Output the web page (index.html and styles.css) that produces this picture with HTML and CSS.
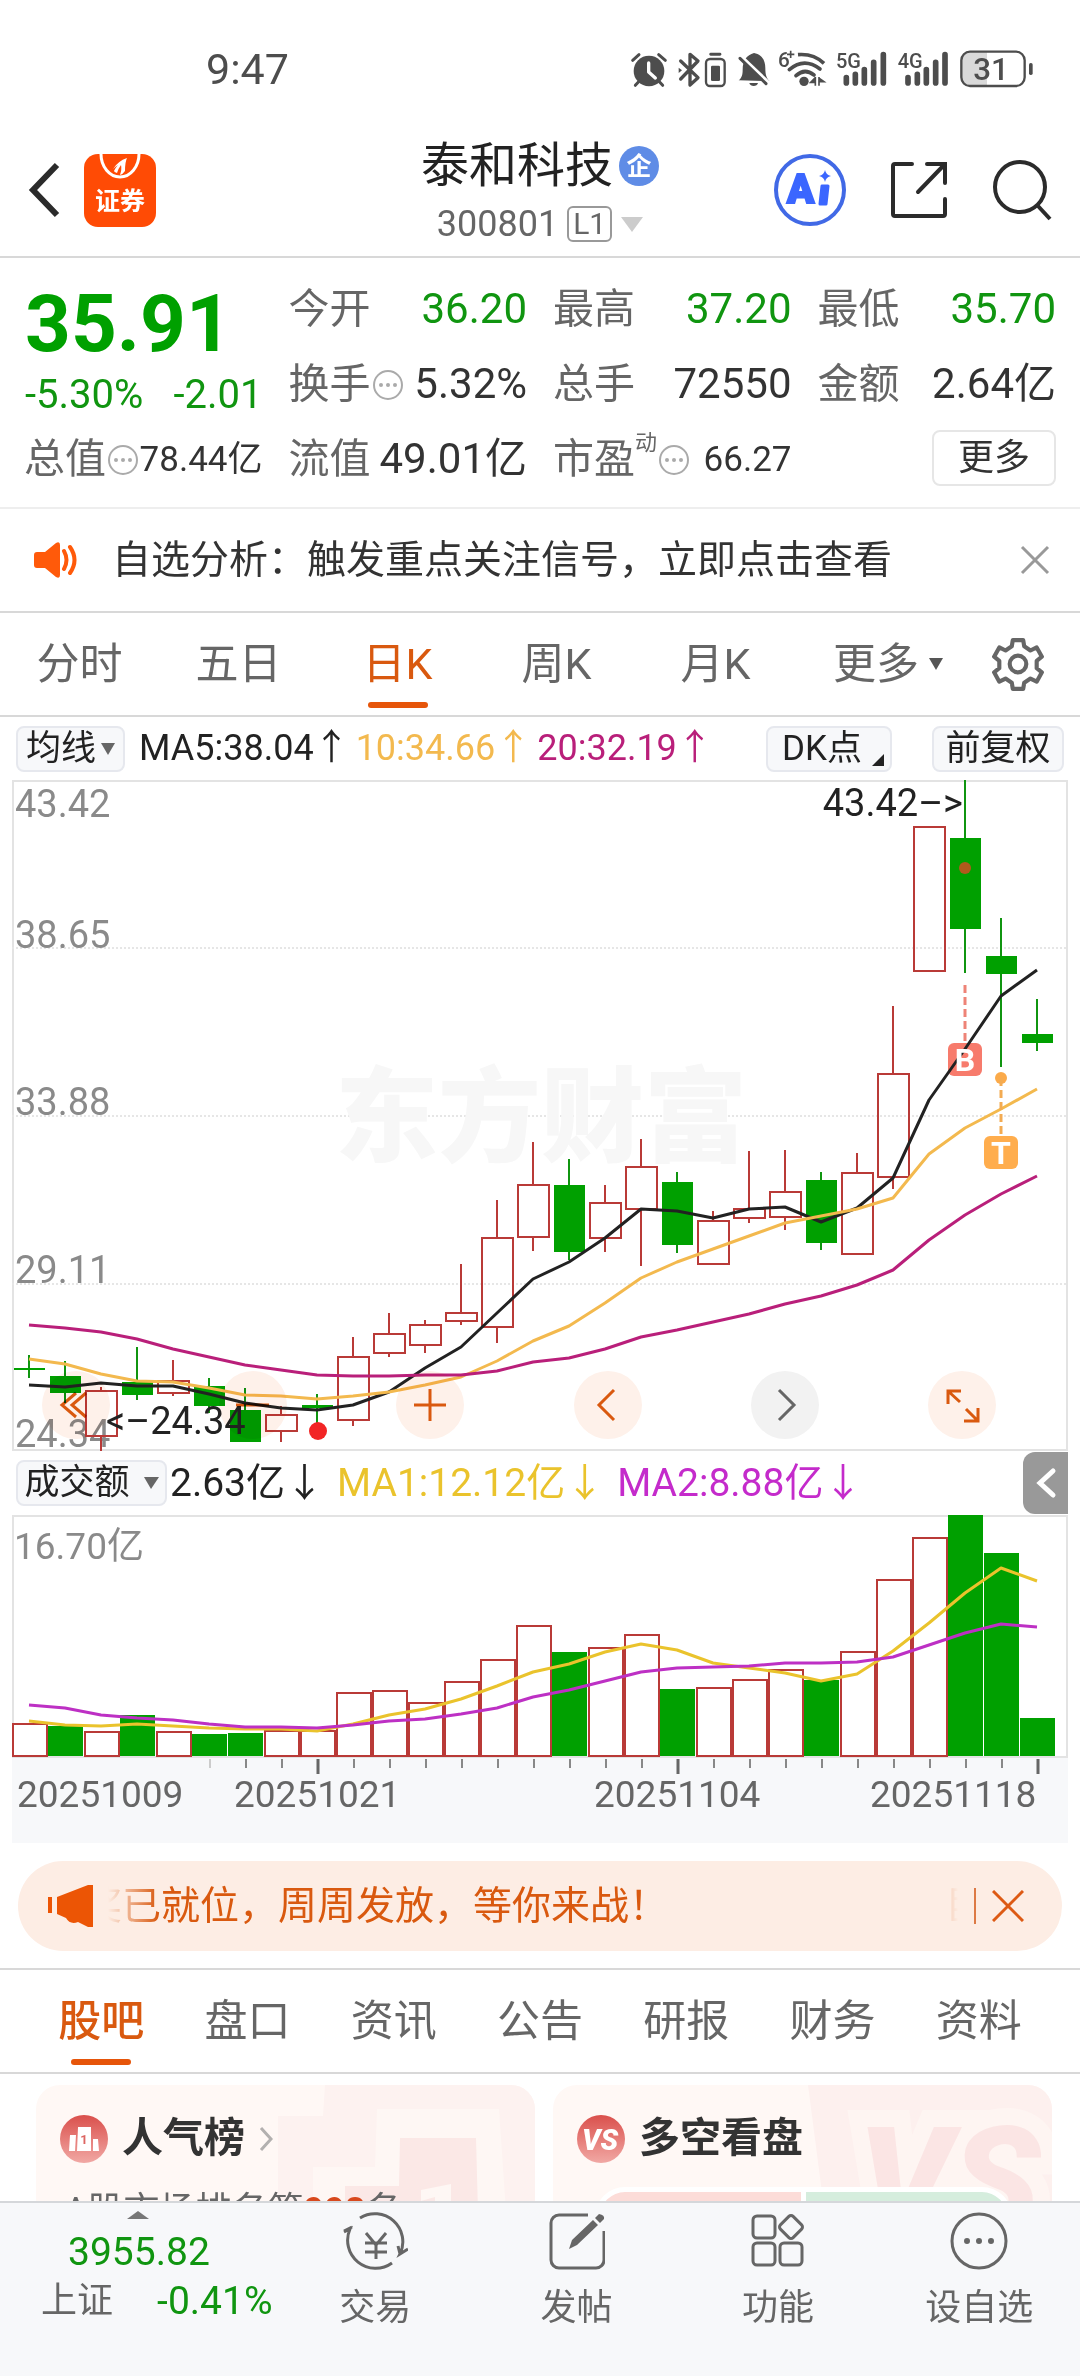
FILE: index.html
```html
<!DOCTYPE html>
<html lang="zh-CN">
<head>
<meta charset="utf-8">
<meta name="viewport" content="width=device-width, initial-scale=1">
<title>泰和科技 300801</title>
<link rel="stylesheet" href="styles.css">
</head>
<body>
<div class="app">

  <div class="status">
    <time class="status-time">9:47</time>
    <svg class="status-icons" viewBox="30 20 1212 132" aria-hidden="true">
      <g fill="#4d4d4d" stroke="none">
        <circle cx="87" cy="92" r="46"/>
        <path d="M38 60 57 43M116 43l20 17M58 122l-12 13M116 122l12 13" stroke="#4d4d4d" stroke-width="9" stroke-linecap="round"/>
        <path d="M86 68v27l20 18" fill="none" stroke="#fff" stroke-width="10" stroke-linecap="round" stroke-linejoin="round"/>
        <path d="M182 62l52 50-24 22V42l24 20-52 54" fill="none" stroke="#4d4d4d" stroke-width="10" stroke-linecap="round" stroke-linejoin="round"/>
        <path d="M176 82l10 8-10 8z"/>
        <rect x="268" y="37" width="36" height="9" rx="4"/>
        <rect x="258" y="56" width="56" height="81" rx="12" fill="none" stroke="#4d4d4d" stroke-width="7"/>
        <rect x="273" y="76" width="27" height="46" rx="4"/>
        <path d="M356 120c10-8 12-18 12-32 0-28 12-44 34-50 24 4 34 22 34 46 0 20 4 30 12 38z"/>
        <path d="M388 128h26c-2 12-24 12-26 0z"/>
        <path d="M356 42l92 88" stroke="#fff" stroke-width="12"/>
        <path d="M360 54l78 76" stroke="#4d4d4d" stroke-width="9" stroke-linecap="round"/>
        <path d="M508 88q44-38 92-2M528 106q26-24 54-2" fill="none" stroke="#4d4d4d" stroke-width="11" stroke-linecap="round"/>
        <path d="M534 43q46-4 78 26" fill="none" stroke="#4d4d4d" stroke-width="11"/>
        <circle cx="552" cy="123" r="14"/>
        <path d="M586 110v26M586 112l-14 14h14M597 110v26M598 114l14 10h-14" stroke="#4d4d4d" stroke-width="5"/>
        <text x="474" y="80" font-size="62" font-weight="500">6</text>
        <path d="M501 42h22M512 31v22" stroke="#4d4d4d" stroke-width="5"/>
        <text x="648" y="83" font-size="60" font-weight="500">5G</text>
        <text x="833" y="83" font-size="60" font-weight="500">4G</text>
        <path d="M679 112v16M706 102v26M733 88v40M761 66v62M790 43v85M864 112v16M892 102v26M919 88v40M947 66v62M975 43v85" stroke="#4d4d4d" stroke-width="17" stroke-linecap="round"/>
      </g>
      <path d="M1101 36h-52a24 24 0 0 0-24 24v50a24 24 0 0 0 24 24h52z" fill="#d9d9d9"/>
      <rect x="1024" y="34" width="190" height="103" rx="26" fill="none" stroke="#4d4d4d" stroke-width="7"/>
      <rect x="1227" y="68" width="11" height="36" rx="5" fill="#4d4d4d"/>
      <text x="1113" y="119" font-size="94" font-weight="500" text-anchor="middle" fill="#4d4d4d">31</text>
    </svg>
  </div>

  <header class="topbar">
    <div class="topbar-side">
      <button class="icon-btn" aria-label="返回"><svg width="34" height="58" viewBox="0 0 34 58"><path d="M29 4 5 29l24 25" fill="none" stroke="#2b2b2b" stroke-width="6"/></svg></button>
      <button class="icon-btn" aria-label="证券"><svg width="72" height="73" viewBox="0 0 72 73">
        <rect width="72" height="73" rx="14" fill="#ff4b05"/>
        <path d="M17 0a19 23 0 0 0 38 0" fill="none" stroke="#fff" stroke-width="3"/>
        <path d="M29 15q5-8 14-11-2 4-2 13-2 3-5 4 2-6 1-10-3 4-4 8-3-1-3-2 2-4 4-6-3 2-5 4z" fill="#fff"/>
        <text x="36" y="56" font-size="25" font-weight="700" text-anchor="middle" fill="#fff">证券</text>
      </svg></button>
    </div>
    <div class="title">
      <h1>泰和科技<svg width="40" height="40" viewBox="0 0 40 40"><circle cx="20" cy="20" r="20" fill="#5f8ce6"/><text x="20" y="29" font-size="25" font-weight="700" text-anchor="middle" fill="#fff">企</text></svg></h1>
      <button class="code">300801<span class="level">L1</span><svg width="22" height="15" viewBox="0 0 22 15"><path d="M0 0h22L11 15z" fill="#ccc"/></svg></button>
    </div>
    <div class="topbar-side topbar-right">
      <button class="icon-btn" aria-label="AI"><svg width="72" height="72" viewBox="0 0 72 72"><circle cx="36" cy="36" r="34" fill="none" stroke="#4169e6" stroke-width="4"/><text x="13" y="49" font-size="40" font-weight="900" fill="#3b66ff" stroke="#3b66ff" stroke-width="2">A</text><path d="M48 32h6l-2 18h-6z" fill="#3b66ff" stroke="#3b66ff" stroke-width="3" stroke-linejoin="round"/><path d="M51 16q1 5 6 6-5 1-6 6-1-5-6-6 5-1 6-6z" fill="#3b66ff"/></svg></button>
      <button class="icon-btn" aria-label="分享"><svg width="58" height="58" viewBox="0 0 58 58"><path d="M22 3H5a2 2 0 0 0-2 2v48a2 2 0 0 0 2 2h48a2 2 0 0 0 2-2V38M37 3h18v19M55 3 28 31" fill="none" stroke="#2b2b2b" stroke-width="4" stroke-linecap="round"/></svg></button>
      <button class="icon-btn" aria-label="搜索"><svg width="60" height="62" viewBox="0 0 60 62"><circle cx="28" cy="28" r="25" fill="none" stroke="#2b2b2b" stroke-width="4"/><path d="M46 47l12 13" stroke="#2b2b2b" stroke-width="4"/></svg></button>
    </div>
  </header>

  <section class="quote">
    <div class="price-block">
      <strong class="price">35.91</strong>
      <p class="change"><span>-5.30%</span><span>-2.01</span></p>
    </div>
    <p class="cell"><span>今开</span><b class="down">36.20</b></p>
    <p class="cell"><span>最高</span><b class="down">37.20</b></p>
    <p class="cell"><span>最低</span><b class="down">35.70</b></p>
    <p class="cell"><span>换手</span><i class="hint"></i><b>5.32%</b></p>
    <p class="cell"><span>总手</span><b>72550</b></p>
    <p class="cell"><span>金额</span><b>2.64亿</b></p>
    <p class="cell"><span>总值</span><i class="hint"></i><b class="small">78.44亿</b></p>
    <p class="cell"><span>流值</span><b>49.01亿</b></p>
    <p class="cell"><span>市盈</span><sup>动</sup><i class="hint"></i><b class="small">66.27</b></p>
    <div class="cell cell-end"><button class="more">更多</button></div>
  </section>

  <section class="notice">
    <svg width="46" height="38" viewBox="0 0 46 38"><path d="M3 11h8L22 2q4-2 4 2v30q0 4-4 2l-11-9H3q-3 0-3-3V14q0-3 3-3z" fill="#ff5a0a"/><path d="M30 10q5 9 0 18M36 6q9 13 0 26" fill="none" stroke="#ff5a0a" stroke-width="4" stroke-linecap="round"/></svg>
    <a href="#signal">自选分析：触发重点关注信号，立即点击查看</a>
    <button class="icon-btn" aria-label="关闭"><svg width="30" height="30" viewBox="0 0 30 30"><path d="M2 2l26 26M28 2 2 28" stroke="#999" stroke-width="3"/></svg></button>
  </section>

  <nav class="periods">
    <button>分时</button>
    <button>五日</button>
    <button class="active">日K</button>
    <button>周K</button>
    <button>月K</button>
    <button class="wide">更多<svg width="14" height="12" viewBox="0 0 14 12"><path d="M0 0h14L7 12z" fill="#555"/></svg></button>
    <button class="gear" aria-label="设置"><svg width="54" height="54" viewBox="0 0 52 52" fill="none" stroke="#666" stroke-width="4" stroke-linejoin="round"><path d="M21 3h10l1 6 6 4 6-3 5 9-5 4v7l5 4-5 9-6-3-6 4-1 6H21l-1-6-6-4-6 3-5-9 5-4v-7l-5-4 5-9 6 3 6-4z"/><circle cx="26" cy="26" r="8"/></svg></button>
  </nav>

  <section class="chart">
    <div class="legend">
      <button class="chip">均线<svg width="14" height="12" viewBox="0 0 14 12"><path d="M0 0h14L7 12z" fill="#666"/></svg></button>
      <span class="ma5">MA5:38.04↑</span><span class="ma10">10:34.66↑</span><span class="ma20">20:32.19↑</span>
      <button class="chip chip-dk">DK点<svg width="12" height="12" viewBox="0 0 12 12"><path d="M12 0v12H0z" fill="#222"/></svg></button>
      <button class="chip chip-adj">前复权</button>
    </div>

    <div class="kline">
      <svg class="plot" viewBox="12 780 1056 671" role="img" aria-label="日K线">
        <rect x="13" y="781" width="1054" height="669" fill="none" stroke="#e3e3e3" stroke-width="2"/>
        <path d="M12 948h1056M12 1116h1056M12 1284h1056" stroke="#e6e6e6" stroke-width="2" stroke-dasharray="2 2"/>
        <text x="541" y="1154" class="watermark">东方财富</text>
        <g class="axis">
          <text x="15" y="817">43.42</text>
          <text x="15" y="948">38.65</text>
          <text x="15" y="1115">33.88</text>
          <text x="15" y="1283">29.11</text>
          <text x="15" y="1447">24.34</text>
        </g>
        <!-- rising candles: wicks, then bodies -->
        <path class="up" d="M101 1387v4M101 1436v15M173 1360v21M173 1393v3M281 1406v9M281 1431v11M353 1337v20M353 1420v6M389 1313v21M389 1353v4M425 1320v5M425 1345v8M461 1264v49M461 1321v4M497 1200v38M497 1327v16M533 1142v43M533 1237v14M605 1185v18M605 1238v14M641 1139v28M641 1209v57M713 1211v10M749 1151v58M749 1218v5M785 1150v42M785 1217v13M857 1153v20M893 1006v68M893 1177v12"/>
        <path class="up" d="M86 1391h31v45h-31zM158 1381h31v12h-31zM266 1415h31v16h-31zM338 1357h31v63h-31zM374 1334h31v19h-31zM410 1325h31v20h-31zM446 1313h31v8h-31zM482 1238h31v89h-31zM518 1185h31v52h-31zM590 1203h31v35h-31zM626 1167h31v42h-31zM698 1221h31v43h-31zM734 1209h31v9h-31zM770 1192h31v25h-31zM842 1173h31v81h-31zM878 1074h31v103h-31zM914 827h31v144h-31z"/>
        <!-- falling candles -->
        <path class="down-wick" d="M29 1355v23M65 1361v42M137 1347v53M209 1378v35M245 1388v54M317 1394v29M569 1159v101M677 1172v81M821 1172v78M965 780v193M1001 918v149M1037 999v52"/>
        <path class="down-body" d="M14 1368h31v2h-31zM50 1376h31v17h-31zM122 1382h31v13h-31zM194 1386h31v20h-31zM230 1410h31v32h-31zM302 1405h31v3h-31zM554 1185h31v67h-31zM662 1182h31v63h-31zM806 1180h31v63h-31zM950 838h31v91h-31zM986 956h31v18h-31zM1022 1034h31v9h-31z"/>
        <circle cx="965" cy="868" r="6" fill="#b0591c"/>
        <path d="M965 985v57" stroke="#ee8377" stroke-width="3" stroke-dasharray="8 4"/>
        <rect x="948" y="1043" width="34" height="33" rx="6" fill="#f77b6c"/>
        <polyline class="line" stroke="#222" points="29,1385 65,1387 101,1383 137,1386 173,1386 209,1394 245,1403 281,1408 317,1410 353,1405 389,1392 425,1368 461,1347 497,1313 533,1279 569,1262 605,1238 641,1209 677,1211 713,1218 749,1209 785,1207 821,1222 857,1208 893,1178 929,1100 965,1049 1001,996 1037,970"/>
        <polyline class="line" stroke="#f3b94e" points="29,1359 65,1364 101,1374 137,1381 173,1382 209,1388 245,1395 281,1396 317,1399 353,1396 389,1392 425,1385 461,1377 497,1361 533,1341 569,1326 605,1303 641,1278 677,1262 713,1249 749,1236 785,1223 821,1216 857,1209 893,1198 929,1154 965,1128 1001,1109 1037,1089"/>
        <polyline class="line" stroke="#b91f7a" points="29,1325 65,1328 101,1332 137,1339 173,1349 209,1357 245,1365 281,1370 317,1375 353,1376 389,1376 425,1375 461,1375 497,1371 533,1362 569,1358 605,1349 641,1337 677,1330 713,1322 749,1314 785,1304 821,1296 857,1285 893,1270 929,1240 965,1215 1001,1194 1037,1176"/>
        <text x="965" y="1071" class="tag">B</text>
        <circle cx="1001" cy="1078" r="6" fill="#fbaa4a"/>
        <path d="M1001 1078v57" stroke="#f3ab52" stroke-width="3" stroke-dasharray="8 4"/>
        <rect x="984" y="1136" width="34" height="33" rx="6" fill="#ffad4d"/>
        <text x="1001" y="1164" class="tag">T</text>
        <circle cx="318" cy="1431" r="9" fill="#f22525"/>
        <text x="963" y="816" class="mark" text-anchor="end">43.42–&gt;</text>
        <text x="106" y="1434" class="mark">&lt;–24.34</text>
      </svg>
      <div class="tools">
        <button aria-label="最左"><svg viewBox="0 0 68 68"><path d="M34 22 20 34l14 12M44 22 30 34l14 12"/></svg></button>
        <button aria-label="缩小"><svg viewBox="0 0 68 68"><path d="M17 34h33"/></svg></button>
        <button aria-label="放大"><svg viewBox="0 0 68 68"><path d="M18 34h32M34 18v32"/></svg></button>
        <button aria-label="左移"><svg viewBox="0 0 68 68"><path d="M40 19 25 34l15 15"/></svg></button>
        <button class="muted" aria-label="右移"><svg viewBox="0 0 68 68"><path d="M28 19l15 15-15 15"/></svg></button>
        <button aria-label="全屏"><svg viewBox="0 0 68 68"><path d="M33 20H20v13M20 20l12 11M50 37v13H36M50 50 38 38"/></svg></button>
      </div>
    </div>

    <div class="legend legend-volume">
      <button class="chip chip-volume">成交额<svg width="15" height="12" viewBox="0 0 15 12"><path d="M0 0h15L7 12z" fill="#666"/></svg></button>
      <span>2.63亿↓</span><span class="vol1">MA1:12.12亿↓</span><span class="vol2">MA2:8.88亿↓</span>
      <button class="drawer" aria-label="展开"><svg width="45" height="62" viewBox="0 0 45 62"><path d="M30 19 17 31l13 12" fill="none" stroke="#fff" stroke-width="5" stroke-linecap="round"/></svg></button>
    </div>

    <svg class="plot" viewBox="12 1515 1056 328" role="img" aria-label="成交额">
      <rect x="12" y="1757" width="1056" height="86" fill="#f7f8fa"/>
      <rect x="13" y="1516" width="1054" height="241" fill="none" stroke="#e3e3e3" stroke-width="2"/>
      <text x="14" y="1559" class="volume-max">16.70亿</text>
      <path class="up" d="M13 1724h34v32h-34zM85 1732h34v24h-34zM157 1732h34v24h-34zM265 1731h34v25h-34zM301 1731h34v25h-34zM337 1693h34v63h-34zM373 1691h34v65h-34zM409 1703h34v53h-34zM445 1682h34v74h-34zM481 1660h34v96h-34zM517 1626h34v130h-34zM589 1648h34v108h-34zM625 1635h34v121h-34zM697 1688h34v68h-34zM733 1680h34v76h-34zM769 1670h34v86h-34zM841 1652h34v104h-34zM877 1580h34v176h-34zM913 1538h34v218h-34z"/>
      <path class="down-body" d="M48 1726h35v30h-35zM120 1715h35v41h-35zM192 1734h35v22h-35zM228 1733h35v23h-35zM552 1652h35v104h-35zM660 1689h35v67h-35zM804 1680h35v76h-35zM948 1515h35v241h-35zM984 1553h35v203h-35zM1020 1718h35v38h-35z"/>
      <polyline class="line" stroke="#eac32c" points="29,1721 65,1725 101,1726 137,1724 173,1726 209,1728 245,1729 281,1729 317,1731 353,1724 389,1715 425,1709 461,1699 497,1686 533,1672 569,1664 605,1652 641,1644 677,1650 713,1663 749,1668 785,1673 821,1681 857,1674 893,1651 929,1623 965,1593 1001,1568 1037,1581"/>
      <polyline class="line" stroke="#bd30c4" points="29,1705 65,1708 101,1715 137,1718 173,1720 209,1724 245,1727 281,1727 317,1728 353,1725 389,1721 425,1719 461,1714 497,1708 533,1697 569,1690 605,1681 641,1672 677,1668 713,1667 749,1666 785,1663 821,1663 857,1662 893,1657 929,1645 965,1633 1001,1624 1037,1627"/>
      <path d="M210 1759v9" stroke="#ccc" stroke-width="2"/>
      <path d="M246 1759v9M282 1759v9M354 1759v9M390 1759v9M426 1759v9M462 1759v9M498 1759v9M534 1759v9M570 1759v9M606 1759v9M642 1759v9M714 1759v9M750 1759v9M786 1759v9M822 1759v9M858 1759v9M894 1759v9M930 1759v9M966 1759v9M1002 1759v9" stroke="#888" stroke-width="2"/>
      <path d="M318 1759v15M678 1759v15M1038 1759v15" stroke="#666" stroke-width="3"/>
      <g class="dates">
        <text x="17" y="1807">20251009</text>
        <text x="234" y="1807">20251021</text>
        <text x="594" y="1807">20251104</text>
        <text x="870" y="1807">20251118</text>
      </g>
    </svg>
  </section>

  <section class="banner">
    <svg width="46" height="42" viewBox="0 0 46 42"><path d="M0 12h4v16H0zM9 12 40 0h5v42h-5l-10-5q-8 3-12-4L9 29z" fill="#ec5505"/></svg>
    <div class="marquee"><span>巨奖已就位，周周发放，等你来战！</span><span>巨奖已就位</span></div>
    <button class="banner-close" aria-label="关闭"><svg width="32" height="32" viewBox="0 0 32 32"><path d="M1 1l30 30M31 1 1 31" stroke="#dd5a14" stroke-width="3"/></svg></button>
  </section>

  <nav class="sections">
    <button class="active">股吧</button>
    <button>盘口</button>
    <button>资讯</button>
    <button>公告</button>
    <button>研报</button>
    <button>财务</button>
    <button>资料</button>
  </nav>

  <section class="cards">
    <article class="card">
      <svg class="card-art" viewBox="0 0 500 200" preserveAspectRatio="xMaxYMin slice" aria-hidden="true">
        <path d="M290 0h210v200H243V31h45z" fill="#fdf2f0"/>
        <path d="M342 24h122l12 176H278V82h62z" fill="#fef7f4"/>
        <path d="M365 53h76l4 147H310V101h54z" fill="#fbe8e6"/>
        <path d="M386 105l30-6v101h-16v-88l-14 4z" fill="#fef7f4"/>
      </svg>
      <h2><svg width="48" height="48" viewBox="0 0 48 48"><defs><linearGradient id="badge" x2="0" y2="1"><stop stop-color="#da504c"/><stop offset="1" stop-color="#f1a8a4"/></linearGradient></defs><circle cx="24" cy="24" r="24" fill="url(#badge)"/><path d="M10 20h6l-1 16H9zM18 12h13v24H17zM33 24h5l1 12h-6z" fill="#fff"/><text x="24" y="29" font-size="13" font-weight="700" text-anchor="middle" fill="#dd6663">1</text></svg>人气榜<svg width="14" height="24" viewBox="0 0 14 24"><path d="M2 1l10 11L2 23" fill="none" stroke="#b3b0af" stroke-width="3"/></svg></h2>
      <p class="rank">A股市场排名第<b>998</b>名</p>
    </article>
    <article class="card">
      <svg class="card-art" viewBox="0 0 500 200" preserveAspectRatio="xMaxYMin slice" aria-hidden="true">
        <path d="M256 0h244v200H282z" fill="#fdf0ee"/>
        <text x="306" y="146" class="art-vs">VS</text>
      </svg>
      <h2><svg width="48" height="48" viewBox="0 0 48 48"><circle cx="24" cy="24" r="24" fill="url(#badge)"/><text x="23" y="35" font-size="29" font-weight="900" font-style="italic" text-anchor="middle" fill="#fff">VS</text></svg>多空看盘</h2>
      <div class="gauge"><span></span><span></span></div>
    </article>
  </section>

  <nav class="bottom">
    <a class="index" href="#index">
      <svg width="22" height="8" viewBox="0 0 22 8"><path d="M11 0l11 8H0z" fill="#777"/></svg>
      <span class="index-value">3955.82</span>
      <span class="index-row"><span>上证</span><span class="index-change">-0.41%</span></span>
    </a>
    <a href="#trade"><svg width="66" height="60" viewBox="0 0 66 60"><path d="M18 7A28 28 0 0 1 58 43l8-5M50 52A28 28 0 0 1 8 18l-6 3M2 20l8-4M58 43l-2-8M34 34v14M34 34 24 22M34 34l10-12M23 32h22M23 41h22"/></svg>交易</a>
    <a href="#post"><svg width="56" height="60" viewBox="0 0 56 60"><path d="M39 4H10a8 8 0 0 0-8 8v37a8 8 0 0 0 8 8h37a8 8 0 0 0 8-8V20"/><path d="M20 38l3-9L44 9l5 5-21 20zM46 7l4-4q6 1 5 5l-4 4z" fill="#666" stroke="none"/></svg>发帖</a>
    <a href="#tools"><svg width="54" height="60" viewBox="0 0 54 60"><rect x="2" y="5" width="22" height="22" rx="4"/><rect x="2" y="32" width="22" height="22" rx="4"/><rect x="29" y="32" width="22" height="22" rx="4"/><rect x="31" y="7" width="18" height="18" rx="3" transform="rotate(45 40 16)"/></svg>功能</a>
    <a href="#watch"><svg width="58" height="60" viewBox="0 0 58 60"><circle cx="29" cy="30" r="27"/><path d="M17 30h0M29 30h0M41 30h0" stroke-width="6" stroke-linecap="round"/></svg>设自选</a>
  </nav>
</div>
</body>
</html>
```

FILE: styles.css
```css
* { box-sizing: border-box; }

body {
  margin: 0;
  background: #fff;
  color: #222;
  font-family: Roboto, "Noto Sans CJK SC", sans-serif;
  font-size: 36px;
  line-height: 1.4;
}

h1, h2, p { margin: 0; font-weight: 400; }

button {
  margin: 0;
  padding: 0;
  border: 0;
  background: none;
  color: inherit;
  font: inherit;
  white-space: nowrap;
}

a { color: inherit; text-decoration: none; }
svg { display: block; flex: none; }

.app {
  display: flex;
  flex-direction: column;
  height: 100vh;
}
.app > * { flex: none; }

.icon-btn { display: flex; }

/* status bar */
.status {
  display: flex;
  align-items: center;
  justify-content: space-between;
  height: 124px;
  padding: 14px 46px 0 206px;
  color: #4d4d4d;
}
.status-time { font-size: 43px; }
.status-icons { width: 404px; height: 44px; }

/* title bar */
.topbar {
  display: grid;
  grid-template-columns: 1fr auto 1fr;
  align-items: center;
  height: 134px;
  padding: 0 28px 0 28px;
  border-bottom: 2px solid #d8d8d8;
}
.topbar-side { display: flex; align-items: center; gap: 22px; }
.topbar-right { justify-content: flex-end; gap: 44px; }
.title { display: flex; flex-direction: column; align-items: center; padding-top: 8px; }
.title h1 {
  display: flex;
  align-items: center;
  gap: 6px;
  font-size: 48px;
  line-height: 60px;
}
.code {
  display: flex;
  align-items: center;
  gap: 9px;
  color: #666;
  line-height: 56px;
}
.level {
  padding: 0 4px;
  border: 2px solid #999;
  border-radius: 6px;
  font-size: 30px;
  line-height: 32px;
}

/* quote grid */
.quote {
  display: grid;
  grid-template-columns: repeat(4, 1fr);
  grid-auto-rows: 75px;
  column-gap: 26px;
  padding: 14px 24px 12px;
  height: 251px;
  border-bottom: 2px solid #eee;
}
.price-block { grid-row: span 2; padding: 5px 0 0 1px; color: #00a000; }
.price { display: block; font-size: 80px; line-height: 94px; font-weight: 700; }
.change {
  display: flex;
  justify-content: space-between;
  font-size: 40px;
  line-height: 48px;
  color: #109510;
}
.cell { display: flex; align-items: center; font-size: 41px; color: #666; white-space: nowrap; }
.cell b { margin-left: auto; font-size: 42px; font-weight: 400; color: #333; }
.cell b.down { color: #109510; }
.cell b.small { font-size: 35px; }
.cell sup { align-self: flex-start; margin-top: 6px; font-size: 22px; line-height: 30px; }
.cell-end { justify-content: flex-end; }
.hint {
  display: flex;
  align-items: center;
  justify-content: center;
  width: 30px;
  height: 30px;
  margin-left: 2px;
  border: 2px solid #aaa;
  border-radius: 50%;
}
.hint::before {
  content: "";
  width: 4px;
  height: 4px;
  border-radius: 50%;
  background: #aaa;
  box-shadow: -7px 0 #aaa, 7px 0 #aaa;
}
.more {
  width: 124px;
  height: 56px;
  margin-bottom: 4px;
  border: 2px solid #e6e6e6;
  border-radius: 8px;
  font-size: 36px;
  line-height: 50px;
  color: #333;
}

/* notice */
.notice {
  display: flex;
  align-items: center;
  height: 104px;
  padding: 0 30px 0 34px;
  border-bottom: 2px solid #d8d8d8;
}
.notice a { flex: 1; margin-left: 32px; font-size: 39px; color: #333; white-space: nowrap; }

/* period tabs */
.periods { display: flex; height: 104px; padding-right: 25px; border-bottom: 2px solid #d8d8d8; }
.periods button,
.sections button {
  position: relative;
  display: flex;
  flex: 159 0 0;
  align-items: center;
  justify-content: center;
  font-size: 43px;
  color: #666;
}
.periods .wide { flex-grow: 186; gap: 10px; }
.periods .gear { flex-grow: 74; }
.periods .active,
.sections .active { color: #d9590f; }
.active::after {
  content: "";
  position: absolute;
  bottom: 7px;
  left: 50%;
  width: 60px;
  height: 6px;
  margin-left: -30px;
  border-radius: 3px;
  background: #e6550a;
}

/* charts */
.chart { padding: 0 12px; }
.plot { width: 100%; height: auto; }
.legend {
  display: flex;
  align-items: center;
  gap: 6px;
  height: 63px;
  padding: 0 4px;
  white-space: nowrap;
}
.chip {
  display: flex;
  align-items: center;
  justify-content: center;
  gap: 5px;
  height: 46px;
  padding: 0 8px;
  border: 2px solid #e6e8ee;
  border-radius: 8px;
  background: #f7f8fa;
  font-size: 35px;
  line-height: 42px;
}
.ma5 { margin-left: 8px; }
.ma10 { color: #f3b94e; }
.ma20 { color: #b91f7a; }
.chip-dk { width: 126px; margin-left: auto; gap: 10px; padding: 0 4px 0 12px; }
.chip-dk svg { align-self: flex-end; margin-bottom: 4px; }
.chip-adj { width: 132px; margin-left: 34px; }
.legend-volume { height: 64px; gap: 13px; padding-right: 0; font-size: 39px; }
.chip-volume { width: 151px; gap: 14px; margin-right: -10px; }
.vol1 { color: #eac32c; }
.vol2 { color: #c42bcb; }
.drawer { margin-left: auto; border-radius: 12px 0 0 12px; background: #999; }

.kline { position: relative; }
.tools {
  position: absolute;
  right: 72px;
  bottom: 12px;
  left: 30px;
  display: flex;
  justify-content: space-between;
  mix-blend-mode: multiply;
}
.tools button {
  width: 68px;
  height: 68px;
  border-radius: 50%;
  background: #fef1ea;
}
.tools svg { fill: none; stroke: #d9590f; stroke-width: 3; }
.tools .muted { background: #f2f2f2; }
.tools .muted svg { stroke: #666; }

.up { fill: none; stroke: #b93a37; stroke-width: 2; }
.down-wick { fill: none; stroke: #109510; stroke-width: 2; }
.down-body { fill: #00a000; }
.line { fill: none; stroke-width: 3; stroke-linejoin: round; }
.axis text { font-size: 38px; fill: #8a8a8a; }
.volume-max { font-size: 37px; fill: #8a8a8a; }
.mark { font-size: 38px; fill: #222; }
.dates text { font-size: 37px; fill: #666; }
.tag { font-size: 32px; font-weight: 700; fill: #fff; text-anchor: middle; }
.watermark { font-size: 103px; font-weight: 900; fill: #f7f7f7; text-anchor: middle; }

/* banner */
.banner {
  display: flex;
  align-items: center;
  height: 90px;
  margin: 18px 18px 17px;
  padding: 0 38px 0 30px;
  border-radius: 45px;
  background: #fdede4;
  color: #d9590f;
}
.marquee {
  display: flex;
  flex: 1;
  gap: 277px;
  margin: 0 16px 0 14px;
  overflow: hidden;
  font-size: 39px;
  line-height: 56px;
  white-space: nowrap;
  -webkit-mask-image: linear-gradient(90deg, transparent, #000 50px, #000 calc(100% - 50px), transparent);
  mask-image: linear-gradient(90deg, transparent, #000 50px, #000 calc(100% - 50px), transparent);
}
.marquee span:first-child { margin-left: -64px; }
.banner-close { display: flex; align-items: center; height: 36px; padding-left: 16px; border-left: 2px solid #dd7a45; }

/* content tabs */
.sections {
  display: flex;
  height: 106px;
  padding: 0 28px;
  border-top: 2px solid #d8d8d8;
  border-bottom: 2px solid #d8d8d8;
}
.sections .active { font-weight: 500; }

/* cards */
.app > .cards {
  display: grid;
  flex: 1 0 127px;
  grid-template-columns: 1fr 1fr;
  grid-template-rows: 200px;
  gap: 18px;
  height: 0;
  padding: 11px 28px 0 36px;
  overflow: hidden;
}
.card {
  position: relative;
  padding: 30px 24px;
  border-radius: 24px;
  background: #fff8f5;
  overflow: hidden;
}
.card-art { position: absolute; inset: 0; width: 100%; height: 100%; }
.card h2 {
  position: relative;
  display: flex;
  align-items: center;
  gap: 14px;
  height: 48px;
  font-size: 41px;
  font-weight: 700;
  color: #333;
}
.rank { position: relative; margin-top: 24px; padding-left: 4px; line-height: 48px; color: #666; }
.rank b { color: #d8481c; }
.gauge {
  position: relative;
  display: flex;
  gap: 5px;
  height: 60px;
  margin: 24px 16px 0 18px;
  border: 5px solid #fff;
  border-radius: 30px;
  background: #fff;
  overflow: hidden;
}
.gauge span { flex: 1; background: #fcdcd8; }
.gauge span + span { background: #d5eddd; }
.art-vs {
  font-family: Roboto, sans-serif;
  font-size: 146px;
  font-style: italic;
  font-weight: 900;
  fill: #fbe5e4;
  stroke: #fef5f2;
  stroke-width: 34px;
  paint-order: stroke;
}

/* bottom bar */
.bottom {
  display: grid;
  grid-template-columns: 274fr repeat(4, 201fr);
  min-height: 176px;
  border-top: 2px solid #d5d7da;
  background: #f7f8fa;
  color: #666;
}
.bottom a {
  display: flex;
  flex-direction: column;
  align-items: center;
  gap: 10px;
  padding-top: 8px;
  line-height: 54px;
}
.bottom a > svg { fill: none; stroke: #666; stroke-width: 3; }
.bottom .index { align-items: stretch; gap: 0; padding: 8px 2px 0 41px; }
.bottom .index > svg { margin: 0 86px; stroke: none; }
.index-value { margin: 6px 27px 0; font-size: 39px; line-height: 54px; color: #109510; }
.index-row { display: flex; justify-content: space-between; line-height: 44px; }
.index-change { font-size: 39px; color: #109510; }
```
